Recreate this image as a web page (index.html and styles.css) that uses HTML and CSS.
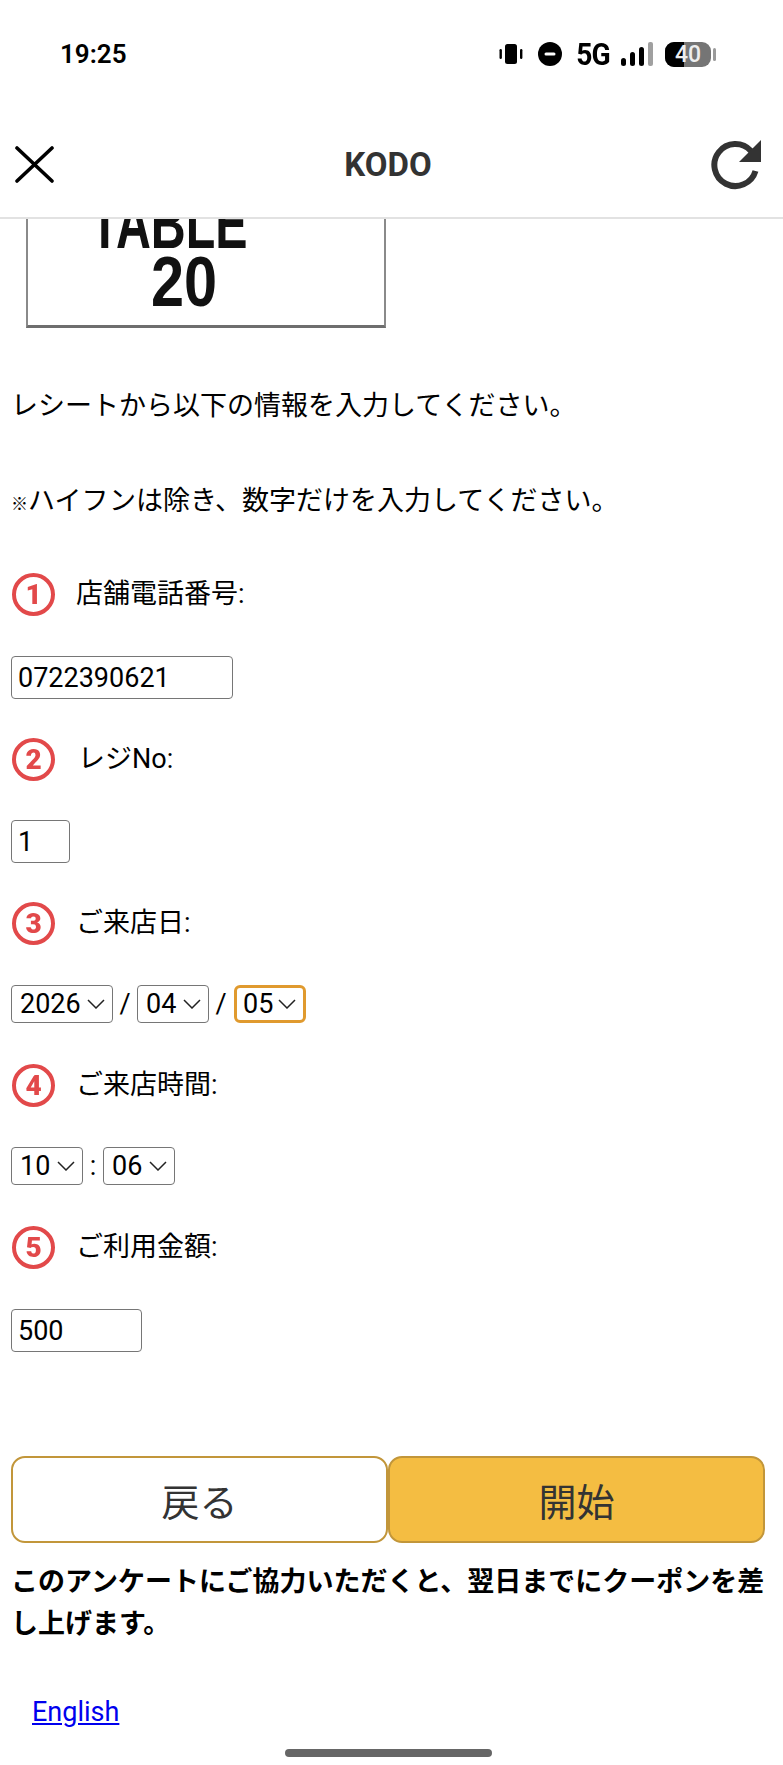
FILE: index.html
```html
<!DOCTYPE html>
<html lang="ja">
<head>
  <meta charset="UTF-8">
  <meta name="viewport" content="width=device-width, initial-scale=1.0">
  <title>KODO</title>
  <link rel="stylesheet" href="styles.css">
</head>
<body>
  <div class="status-bar">
    <span class="time">19:25</span>
    <div class="status-icons">
      <svg class="ic-vibrate" width="24" height="24" viewBox="0 0 24 24"><rect x="6" y="2" width="12" height="20" rx="2.5" fill="#000"/><rect x="0.5" y="7" width="2.4" height="10" rx="1.2" fill="#000"/><rect x="21" y="7" width="2.4" height="10" rx="1.2" fill="#000"/></svg>
      <svg class="ic-dnd" width="24" height="24" viewBox="0 0 24 24"><circle cx="12" cy="12" r="12" fill="#000"/><rect x="6.5" y="10.5" width="11" height="3" rx="1.5" fill="#fff"/></svg>
      <span class="net">5G</span>
      <svg class="ic-signal" width="33" height="24" viewBox="0 0 33 24"><rect x="0" y="16" width="5" height="8" rx="2.5" fill="#000"/><rect x="9" y="10" width="5" height="14" rx="2.5" fill="#000"/><rect x="18" y="5" width="5" height="19" rx="2.5" fill="#000"/><rect x="27" y="0" width="5" height="24" rx="2" fill="#a0a0a0"/></svg>
      <div class="battery"><span class="battery-level"></span><span class="battery-text">40</span></div>
      <span class="battery-tip"></span>
    </div>
  </div>

  <header class="top-bar">
    <svg class="ic-close" width="39" height="37" viewBox="0 0 39 37"><path d="M2 2 L37 35 M37 2 L2 35" stroke="#000" stroke-width="3.6" stroke-linecap="round" fill="none"/></svg>
    <span class="top-title">KODO</span>
    <svg class="ic-reload" width="50" height="50" viewBox="0 0 50 50"><path d="M40 11 A21 21 0 1 0 44.5 31" stroke="#333" stroke-width="6" fill="none"/><path d="M50 0 L50 22 L28 22 Z" fill="#333"/></svg>
  </header>

  <main class="content">
    <div class="receipt-box">
      <span class="receipt-line">TABLE</span>
      <span class="receipt-no">20</span>
    </div>

    <p class="lead">レシートから以下の情報を入力してください。</p>
    <p class="note"><span class="mark">※</span>ハイフンは除き、数字だけを入力してください。</p>

    <div class="step">
      <span class="num">1</span>
      <label class="step-label">店舗電話番号:</label>
    </div>
    <div class="row">
      <input class="field field-tel" type="text" value="0722390621">
    </div>

    <div class="step step-tight">
      <span class="num">2</span>
      <label class="step-label step-label-wide">レジNo:</label>
    </div>
    <div class="row">
      <input class="field field-reg" type="text" value="1">
    </div>

    <div class="step">
      <span class="num">3</span>
      <label class="step-label">ご来店日:</label>
    </div>
    <div class="row row-select">
      <select class="pick pick-year"><option>2026</option></select>
      <span class="sep">/</span>
      <select class="pick"><option>04</option></select>
      <span class="sep">/</span>
      <select class="pick pick-focus"><option>05</option></select>
    </div>

    <div class="step">
      <span class="num">4</span>
      <label class="step-label">ご来店時間:</label>
    </div>
    <div class="row row-select">
      <select class="pick"><option>10</option></select>
      <span class="sep sep-colon">:</span>
      <select class="pick"><option>06</option></select>
    </div>

    <div class="step">
      <span class="num">5</span>
      <label class="step-label">ご利用金額:</label>
    </div>
    <div class="row">
      <input class="field field-amount" type="text" value="500">
    </div>

    <div class="buttons">
      <button class="btn btn-back">戻る</button>
      <button class="btn btn-start">開始</button>
    </div>

    <p class="coupon">このアンケートにご協力いただくと、翌日までにクーポンを差し上げます。</p>

    <a class="lang" href="#">English</a>
  </main>

  <div class="home-bar"></div>
</body>
</html>
```

FILE: styles.css
```css
* {
  margin: 0;
  padding: 0;
  box-sizing: border-box;
}

html, body {
  height: 1765px;
  overflow: hidden;
}

body {
  position: relative;
  font-family: Roboto, "Noto Sans CJK JP", sans-serif;
  background: #fff;
  color: #000;
  font-size: 27px;
}

.status-bar {
  height: 100px;
  display: flex;
  align-items: center;
  justify-content: space-between;
  padding: 14px 67px 6px 60px;
}

.time {
  font-size: 26px;
  font-weight: 600;
}

.status-icons {
  display: flex;
  align-items: center;
}

.ic-vibrate {
  margin-right: 15px;
}

.ic-dnd {
  margin-right: 14px;
}

.net {
  font-size: 32px;
  font-weight: 700;
  letter-spacing: -1px;
  margin: 0 9px 0 -2px;
  transform: scaleX(0.88);
}

.ic-signal {
  margin-right: 11px;
}

.battery {
  position: relative;
  width: 46px;
  height: 25px;
  border-radius: 9px;
  background: #757575;
  overflow: hidden;
  display: flex;
  align-items: center;
  justify-content: center;
}

.battery-level {
  position: absolute;
  left: 0;
  top: 0;
  bottom: 0;
  width: 19px;
  background: #000;
}

.battery-text {
  position: relative;
  color: #eee;
  font-size: 23px;
  font-weight: 500;
}

.battery-tip {
  width: 3px;
  height: 13px;
  margin-left: 2px;
  border-radius: 2px;
  background: #9a9a9a;
}

.top-bar {
  height: 119px;
  display: grid;
  grid-template-columns: 1fr auto 1fr;
  align-items: center;
  padding: 12px 22px 0 15px;
  background: #fff;
  border-bottom: 2px solid #e2e2e2;
}

.top-title {
  font-size: 33px;
  font-weight: 700;
  color: #333;
}

.ic-reload {
  justify-self: end;
}

.content {
  padding: 0 18px 0 11px;
}

.receipt-box {
  width: 360px;
  height: 109px;
  margin-left: 15px;
  border: 2px solid #8a8a8a;
  border-top: none;
  border-bottom: 3px solid #6e6e6e;
  background: #fff;
  overflow: hidden;
  display: flex;
  flex-direction: column;
  align-items: flex-start;
  justify-content: flex-end;
  font-family: "Liberation Sans", sans-serif;
  font-size: 70px;
  font-weight: 700;
  line-height: 50px;
  color: #111;
}

.receipt-line {
  flex-shrink: 0;
  margin-left: 62px;
  transform: scaleX(0.69);
  transform-origin: left center;
  filter: blur(0.6px);
}

.receipt-no {
  flex-shrink: 0;
  margin: 8px 0 18px 123px;
  transform: scaleX(0.85);
  transform-origin: left center;
  filter: blur(0.6px);
}

.lead {
  margin-top: 58px;
  line-height: 40px;
}

.note {
  margin-top: 55px;
  line-height: 40px;
  margin-bottom: 49px;
}

.mark {
  font-size: 17px;
  font-weight: 900;
}

.step {
  height: 42px;
  display: flex;
  align-items: center;
  margin-bottom: 41px;
}

.step-tight {
  margin-bottom: 40px;
}

.num {
  width: 43px;
  height: 43px;
  margin-left: 1px;
  flex-shrink: 0;
  border: 4px solid #e2494a;
  border-radius: 50%;
  color: #e2494a;
  font-size: 28px;
  font-weight: 900;
  display: flex;
  align-items: center;
  justify-content: center;
  filter: blur(0.5px);
}

.step-label {
  margin-left: 21px;
  line-height: 40px;
}

.step-label-wide {
  margin-left: 23px;
}

.row {
  display: flex;
  align-items: center;
  margin-bottom: 39px;
}

.row-select {
  margin-bottom: 41px;
}

.field {
  height: 43px;
  border: 1.5px solid #767676;
  border-radius: 4px;
  padding: 0 6px;
  font-family: Roboto, sans-serif;
  font-size: 27px;
  color: #000;
  background: #fff;
  outline: none;
}

.field-tel {
  width: 222px;
}

.field-reg {
  width: 59px;
}

.field-amount {
  width: 131px;
}

.sep {
  width: 24px;
  text-align: center;
}

.sep-colon {
  width: 20px;
}

.pick {
  appearance: none;
  -webkit-appearance: none;
  width: 72px;
  height: 38px;
  border: 1.5px solid #767676;
  border-radius: 4px;
  padding-left: 8px;
  font-family: Roboto, sans-serif;
  font-size: 27px;
  color: #000;
  background: #fff url("data:image/svg+xml,%3Csvg xmlns='http://www.w3.org/2000/svg' width='18' height='10' viewBox='0 0 18 10'%3E%3Cpath d='M1 1 L9 9 L17 1' stroke='%23222' stroke-width='1.5' fill='none'/%3E%3C/svg%3E") no-repeat right 7px center;
  outline: none;
}

.pick-year {
  width: 102px;
}

.pick-focus {
  margin-left: 1px;
  border: 3px solid #e09a2e;
  border-radius: 6px;
  padding-left: 6px;
}

.buttons {
  display: flex;
  margin-top: 104px;
}

.btn {
  width: 377px;
  height: 87px;
  border: 2px solid #c2963a;
  border-radius: 14px;
  font-family: "Noto Sans CJK JP", sans-serif;
  font-size: 38px;
  color: #333;
}

.btn-back {
  background: #fff;
}

.btn-start {
  background: #f4bd42;
}

.coupon {
  margin-top: 18px;
  font-weight: 700;
  line-height: 42px;
  width: 760px;
}

.lang {
  display: inline-block;
  margin: 47px 0 0 21px;
  color: #0000ee;
  line-height: 40px;
}

.home-bar {
  position: absolute;
  left: 285px;
  bottom: 8px;
  width: 207px;
  height: 8px;
  border-radius: 4px;
  background: #666;
}
```
